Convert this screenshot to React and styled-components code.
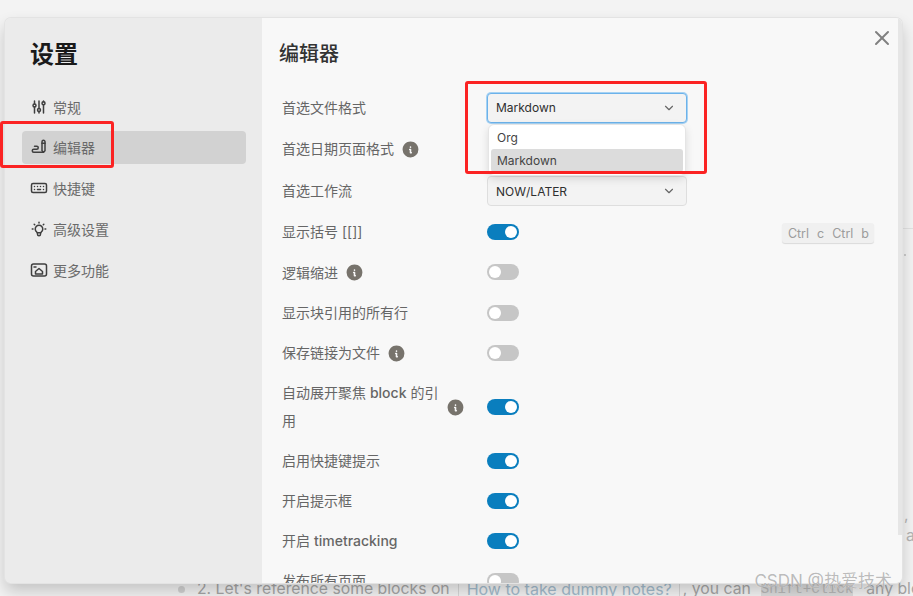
import React from "react";
import styled, { createGlobalStyle } from "styled-components";
import { TbAdjustments, TbWriting, TbKeyboard, TbBulb, TbChevronDown, TbInfoCircleFilled, TbX } from "react-icons/tb";

const Global = createGlobalStyle`
  html, body { margin: 0; padding: 0; height: 100%; overflow: hidden; background: #f3f3f3; }
  * { box-sizing: border-box; }
  body { font-family: Inter, "Noto Sans CJK SC", sans-serif; }
`;

const Page = styled.div`
  position: relative;
  width: 913px;
  height: 596px;
  overflow: hidden;
  background: #f3f3f3;
`;

const BackText = styled.div`
  height: 100%;
  display: flex;
  flex-direction: column;
  padding-top: 228px;
  font-size: 15.75px;
  line-height: 20px;
  color: #a6a6a6;
  white-space: nowrap;
`;

const BackRule = styled.div`
  margin-left: 903px;
  height: 1px;
  background: #e2e2e2;
`;

const BackDot = styled.div`
  margin: 25px 0 0 904px;
  width: 2px;
  height: 2px;
  border-radius: 50%;
  background: #bdbdbd;
`;

const BackFragment = styled.div`
  padding-left: ${p => p.$left}px;
  margin-top: ${p => p.$top};
  margin-bottom: ${p => p.$gap}px;
  color: #b4b4b4;
`;

const BackLine = styled.div`
  padding-left: 178px;
  margin-bottom: -3px;
  display: flex;
  align-items: center;
`;

const Bullet = styled.span`
  flex: none;
  width: 7px;
  height: 7px;
  border-radius: 50%;
  background: #d2d2d2;
  margin-right: 12px;
`;

const BackLink = styled.span`
  flex: none;
  font-size: 16px;
  color: #a3bccd;
  margin: 0 3px 0 8px;
  padding: 0 7px 0 8px;
  border-left: 1px solid #d8d8d8;
  border-right: 1px solid #d8d8d8;
`;

const BackCode = styled.span`
  flex: none;
  font-family: "Liberation Mono", monospace;
  font-size: 14px;
  background: #dcdcdc;
  color: #b8b8b8;
  margin: 0 13px 0 10px;
`;

const Modal = styled.div`
  position: absolute;
  left: 5px;
  top: 18px;
  width: 897px;
  height: 565px;
  display: flex;
  overflow: hidden;
  border-radius: 6px;
  box-shadow: 0 0 0 1px #e3e3e3, 0 8px 16px rgba(0, 0, 0, 0.2);
`;

const Sidebar = styled.aside`
  width: 257px;
  flex: none;
  background: #ebebeb;
  padding: 19px 16px 0 17px;
`;

const SideTitle = styled.h1`
  margin: 0 0 17px 8px;
  font-size: 24px;
  line-height: 36px;
  font-weight: 700;
  color: #1a1a1a;
`;

const SideList = styled.nav`
  display: flex;
  flex-direction: column;
  gap: 7.75px;
`;

const SideItem = styled.div`
  height: 33px;
  display: flex;
  align-items: center;
  gap: 5px;
  padding-left: 8px;
  border-radius: 4px;
  font-size: 14px;
  color: #6a6a6a;
  background: ${p => (p.$active ? "#d2d2d2" : "transparent")};
  svg { flex: none; color: #3f3f3f; }
`;

const Content = styled.main`
  position: relative;
  flex: 1;
  min-width: 0;
  background: #f8f8f8;
  padding: 19px 0 0 17px;
`;

const Heading = styled.h2`
  margin: 0 0 16px;
  font-size: 20px;
  line-height: 34px;
  font-weight: 500;
  color: #333;
`;

const Rows = styled.div`
  display: flex;
  flex-direction: column;
`;

const Row = styled.div`
  display: flex;
  align-items: center;
  min-height: ${p => p.$h || 40}px;
  padding-left: 3px;
`;

const Label = styled.div`
  width: 205px;
  flex: none;
  display: flex;
  align-items: center;
  gap: 7px;
  font-size: 14px;
  line-height: 28px;
  color: #666;
  svg { flex: none; color: #77736c; }
`;

const LabelText = styled.span`
  max-width: ${p => p.$max || 200}px;
`;

const Strong = styled.span`
  font-weight: 500;
`;

const SelectBox = styled.div`
  position: relative;
  width: 200px;
  height: 30px;
  display: flex;
  align-items: center;
  justify-content: space-between;
  padding: 0 10px 0 8px;
  border-radius: 4px;
  font-size: 12px;
  color: #2f2f2f;
  background: #f3f3f3;
  border: 1px solid ${p => (p.$focus ? "#6cb2ea" : "#dedede")};
  box-shadow: ${p => (p.$focus ? "0 0 0 1px #a6d2f3" : "none")};
  svg { color: #666; }
`;

const Menu = styled.div`
  position: absolute;
  left: 0;
  top: 30px;
  width: 198px;
  height: 52px;
  z-index: 2;
  padding: 1px 2px 0;
  background: #fff;
  border-radius: 6px;
  border: 1px solid #e5e5e5;
  box-shadow: 0 3px 8px rgba(0, 0, 0, 0.12);
`;

const MenuItem = styled.div`
  height: 23px;
  display: flex;
  align-items: center;
  padding-left: 6px;
  border-radius: 3px;
  font-size: 12px;
  color: #444;
  background: ${p => (p.$active ? "#dcdcdc" : "transparent")};
`;

const Toggle = styled.div`
  width: 32px;
  height: 16px;
  margin-bottom: 1px;
  border-radius: 8px;
  padding: 2px;
  display: flex;
  justify-content: ${p => (p.$on ? "flex-end" : "flex-start")};
  background: ${p => (p.$on ? "#0a7ebe" : "#c6c6c6")};
  &::after {
    content: "";
    width: 12px;
    height: 12px;
    border-radius: 50%;
    background: #fff;
  }
`;

const CloseButton = styled.div`
  position: absolute;
  right: 8px;
  top: 8px;
  display: flex;
  color: #808080;
`;

const Shortcut = styled.div`
  position: absolute;
  right: 28px;
  top: 205px;
  height: 20px;
  display: flex;
  align-items: center;
  gap: 8px;
  padding: 0 5px 0 6px;
  border-radius: 3px;
  background: #f0f0f0;
  box-shadow: 0 1px 1px rgba(0, 0, 0, 0.12);
  font-size: 12.5px;
  color: #9c9c9c;
`;

const Scrollbar = styled.div`
  position: absolute;
  right: 0;
  top: 0;
  width: 4px;
  height: 517px;
  background: #e6e6e6;
`;

const RedBox = styled.div`
  position: absolute;
  left: ${p => p.$x}px;
  top: ${p => p.$y}px;
  width: ${p => p.$w}px;
  height: ${p => p.$h}px;
  border: 3px solid #fb2323;
  border-radius: 3px;
  z-index: 5;
`;

const Watermark = styled.div`
  position: absolute;
  right: 21px;
  bottom: 5px;
  z-index: 6;
  font-size: 17px;
  line-height: 20px;
  color: rgba(130, 130, 130, 0.55);
  text-shadow: 0 0 1px rgba(255, 255, 255, 0.9);
`;

const FeatureIcon = () => (
  <svg width="18" height="18" viewBox="0 0 18 18" fill="none" stroke="currentColor" strokeWidth="1.5" strokeLinejoin="round" strokeLinecap="round">
    <rect x="1.5" y="3" width="15" height="12" rx="2" />
    <path d="M4 6h2" />
    <path d="M5.5 13v-2.5L9 7.5l3.5 3V13z" />
  </svg>
);

const Info = () => <TbInfoCircleFilled size={19} />;

const On = () => <Toggle $on />;
const Off = () => <Toggle />;

const nav = [
  ["常规", <TbAdjustments size={18} />],
  ["编辑器", <TbWriting size={18} />, true],
  ["快捷键", <TbKeyboard size={18} />],
  ["高级设置", <TbBulb size={18} />],
  ["更多功能", <FeatureIcon />],
];

export default function App() {
  return (
    <Page>
      <Global />
      <BackText>
        <BackRule />
        <BackDot />
        <BackFragment $left={904} $gap={1} $top="auto">, c</BackFragment>
        <BackFragment $left={906} $gap={33} $top="0">a</BackFragment>
        <BackLine>
          <Bullet />
          2. Let's reference some blocks on
          <BackLink>How to take dummy notes?</BackLink>
          , you can
          <BackCode>Shift+Click</BackCode>
          any blocks
        </BackLine>
      </BackText>

      <Modal>
        <Sidebar>
          <SideTitle>设置</SideTitle>
          <SideList>
            {nav.map(([text, icon, active]) => (
              <SideItem key={text} $active={active}>
                {icon}
                {text}
              </SideItem>
            ))}
          </SideList>
        </Sidebar>
        <Content>
          <Heading>编辑器</Heading>
          <Rows>
            <Row $h={41}>
              <Label>首选文件格式</Label>
              <SelectBox $focus>
                Markdown
                <TbChevronDown size={14} />
                <Menu>
                  <MenuItem>Org</MenuItem>
                  <MenuItem $active>Markdown</MenuItem>
                </Menu>
              </SelectBox>
            </Row>
            <Row $h={42}>
              <Label>
                首选日期页面格式
                <Info />
              </Label>
            </Row>
            <Row $h={42}>
              <Label>首选工作流</Label>
              <SelectBox>
                NOW/LATER
                <TbChevronDown size={14} />
              </SelectBox>
            </Row>
            <Row><Label>显示括号 [[]]</Label><On /></Row>
            <Row $h={41}><Label>逻辑缩进<Info /></Label><Off /></Row>
            <Row><Label>显示块引用的所有行</Label><Off /></Row>
            <Row><Label>保存链接为文件<Info /></Label><Off /></Row>
            <Row $h={68}>
              <Label>
                <LabelText $max={157}>自动展开聚焦 <Strong>block</Strong> 的引用</LabelText>
                <Info />
              </Label>
              <On />
            </Row>
            <Row><Label>启用快捷键提示</Label><On /></Row>
            <Row><Label>开启提示框</Label><On /></Row>
            <Row><Label><LabelText>开启 <Strong>timetracking</Strong></LabelText></Label><On /></Row>
            <Row><Label>发布所有页面</Label><Off /></Row>
          </Rows>
          <CloseButton><TbX size={24} /></CloseButton>
          <Shortcut><span>Ctrl</span><span>c</span><span>Ctrl</span><span>b</span></Shortcut>
          <Scrollbar />
        </Content>
      </Modal>

      <RedBox $x={0} $y={121} $w={114} $h={47} />
      <RedBox $x={465} $y={81} $w={242} $h={93} />
      <Watermark>CSDN @热爱技术</Watermark>
    </Page>
  );
}
